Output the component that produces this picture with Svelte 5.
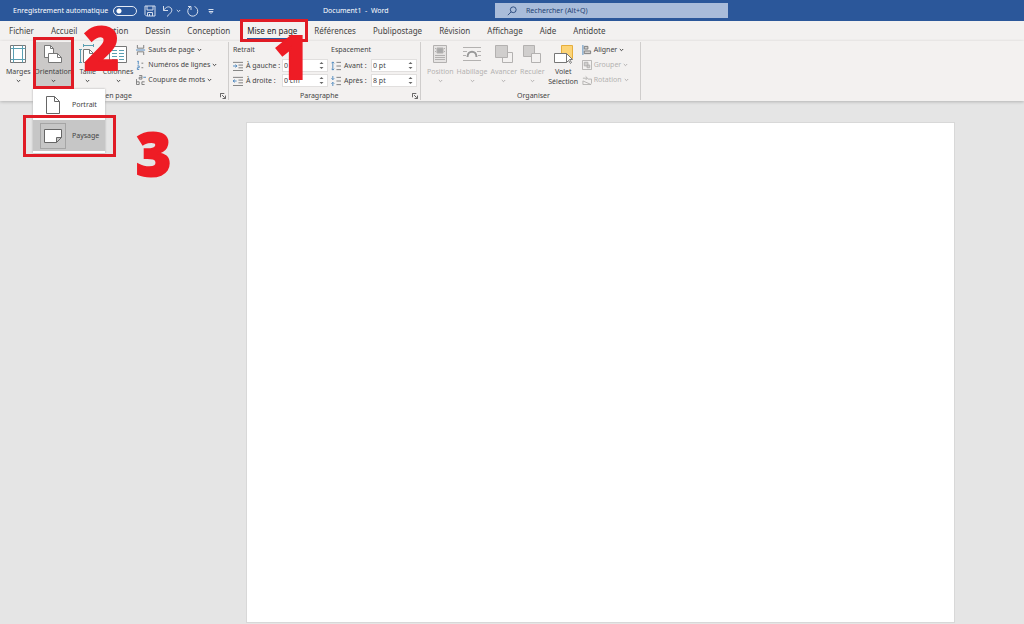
<script lang="ts">
  const tabs = ['Fichier', 'Accueil', 'Insertion', 'Dessin', 'Conception', 'Mise en page', 'Références', 'Publipostage', 'Révision', 'Affichage', 'Aide', 'Antidote'];

  const setupTools = ['Marges', 'Orientation', 'Taille', 'Colonnes'];
  const setupOptions = ['Sauts de page', 'Numéros de lignes', 'Coupure de mots'];
  const arrangeTools = ['Position', 'Habillage', 'Avancer', 'Reculer', 'Volet Sélection'];
  const arrangeOptions = ['Aligner', 'Grouper', 'Rotation'];

  let activeTab = $state('Mise en page');
  let orientation = $state('Paysage');
  let indentLeft = $state('0 cm');
  let indentRight = $state('0 cm');
  let before = $state('0 pt');
  let after = $state('8 pt');
</script>

{#snippet chevron()}
  <svg class="chevron" viewBox="0 0 5 4" aria-hidden="true"><path d="M.8 1l1.7 1.7L4.2 1" /></svg>
{/snippet}

{#snippet bigIcon(name: string)}
  <svg class="big-icon" viewBox="0 0 20 20" aria-hidden="true">
    {#if name === 'Marges'}
      <path class="paper" d="M2.500 1.500h15v17h-15z" />
      <path class="teal" d="M5.500 1.500v17M14.500 1.500v17M2.500 4.500h15M2.500 15.500h15" />
    {:else if name === 'Orientation'}
      <path class="paper" d="M1.500 1.500h6l3 3v9h-9z" />
      <path d="M7.500 1.500v3h3" />
      <path class="paper" d="M5.500 9.500h9l4 4v5h-13z" />
      <path d="M14.500 9.500v4h4" />
    {:else if name === 'Taille'}
      <path class="teal" d="M2.500 5v13M1 5.500h3M1 18.500h3M5 1.500h11M5.500 0v3M15.500 0v3" />
      <path class="paper" d="M5.500 5.500h6l4 4v9h-10z" />
      <path d="M11.500 5.500v4h4" />
    {:else if name === 'Colonnes'}
      <path class="paper" d="M1.500 2.500h17v16h-17z" />
      <path class="teal" d="M4 6.500h5M11 6.500h5M4 9.500h5M11 9.500h5M4 12.500h5M11 12.500h5M4 15.500h5M11 15.500h5" />
    {:else if name === 'Position'}
      <path class="light" d="M3.500 1.500h13v17h-13z" />
      <path class="solid" d="M7 4h6v5H7z" />
      <path d="M5 4.500h1M14 4.500h1M5 7.500h1M14 7.500h1M5 11.500h10M5 13.500h10M5 15.500h10" />
    {:else if name === 'Habillage'}
      <path d="M1 3.500h18M1 7.500h4M15 7.500h4M1 11.500h3M16 11.500h3M1 16.500h18" />
      <path class="arch" d="M5.500 13c0-7 9-7 9 0" />
    {:else if name === 'Avancer'}
      <path class="paper" d="M8.500 8.500h10v10h-10z" />
      <path class="shade" d="M1.500 1.500h12v12h-12z" />
    {:else if name === 'Reculer'}
      <path class="shade" d="M1.500 1.500h11v11h-11z" />
      <path class="paper" d="M9.500 9.500h9v9h-9z" />
    {:else}
      <path class="gold" d="M8.500 1.500h11v13h-11z" />
      <path class="paper" d="M1.500 9.500h12v9h-12z" />
      <path class="paper" d="M13.500 9.500v9l2-2 2 3 1-1-2-3h3z" />
    {/if}
  </svg>
{/snippet}

{#snippet smallIcon(name: string)}
  <svg class="small-icon" viewBox="0 0 11 11" aria-hidden="true">
    {#if name === 'Sauts de page'}
      <path d="M1.500 0v3.500h7V0M1.500 11V7.500h7V11" />
      <path class="blue" d="M0 5.500h10" />
    {:else if name === 'Numéros de lignes'}
      <path class="blue" d="M2.500 1v4M1.500 1.500h1M1.500 6.500h2v2h-2v2h2" />
      <path d="M6 3.500h2M6 8.500h2" />
    {:else if name === 'Coupure de mots'}
      <path d="M.5 4.500v6h3v-3h-3M9.500 7.500h-3v3h3M3.500 .5h3v4h-3v-2h3" />
      <path class="blue" d="M8 2.500h3" />
    {:else if name === 'Aligner'}
      <path class="blue" d="M1 0v11" />
      <path class="shade" d="M2.500 1.500h4v3h-4zM2.500 6.500h7v3h-7z" />
    {:else if name === 'Grouper'}
      <path d="M.5.500h10v10H.5z" />
      <path class="shade" d="M2.500 2.500h4v4h-4zM5.500 5.500h3v3h-3z" />
    {:else if name === 'Rotation'}
      <path d="M1 10.500h9l-9-4zM6.500 4.500h4v5M1 3.500h5M4 1.500l2 2-2 2" />
    {:else if name === 'left' || name === 'right'}
      <path d="M0 1.500h11M6 4.500h5M6 7.500h5M0 10.500h11" />
      <path class="blue" d={name === 'left' ? 'M0 5.500h4M2.500 4l2 1.500-2 1.500' : 'M0 5.500h4M2 4L0 5.500 2 7'} />
    {:else}
      <path d="M6 1.500h5M6 5.500h5M6 9.500h5" />
      <path class="blue" d={name === 'before' ? 'M2 1v9M.5 2.500L2 1l1.500 1.500M.5 8.500L2 10l1.500-1.500' : 'M2 0v4M.5 2.500L2 4l1.500-1.500M2 11V7M.5 8.500L2 7l1.500 1.500'} />
    {/if}
  </svg>
{/snippet}

{#snippet tool(name: string, disabled: boolean)}
  <button class="tool" class:tool--open={name === 'Orientation'} {disabled}>
    {@render bigIcon(name)}
    <span class="tool-label">{name}</span>
    {#if name !== 'Volet Sélection'}
      {@render chevron()}
    {/if}
  </button>
{/snippet}

{#snippet option(name: string, disabled: boolean)}
  <button class="option" {disabled}>
    {@render smallIcon(name)}
    <span>{name}</span>
    {@render chevron()}
  </button>
{/snippet}

{#snippet spinner()}
  <span class="arrows">
    <button aria-label="Augmenter"><svg viewBox="0 0 5 4"><path d="M.5 3h4l-2-2z" /></svg></button>
    <button aria-label="Diminuer"><svg viewBox="0 0 5 4"><path d="M.5 1h4l-2 2z" /></svg></button>
  </span>
{/snippet}

{#snippet launcher()}
  <button class="launcher" aria-label="Paramètres">
    <svg viewBox="0 0 7 7"><path d="M.5 5V.5H5M2.500 2.500l3 3M6.500 3v3.500H3" /></svg>
  </button>
{/snippet}

<div class="window">
  <header class="titlebar">
    <label class="autosave">
      Enregistrement automatique
      <input type="checkbox" class="switch" />
    </label>
    <div class="quick">
      <button aria-label="Enregistrer">
        <svg viewBox="0 0 12 12"><path d="M1 1h10v10H2.500L1 9.500zM3 1v4h6V1M3.500 11V7.500h5V11M5.500 9v2" /></svg>
      </button>
      <button aria-label="Annuler">
        <svg viewBox="0 0 12 12"><path d="M1.500 1v4.500H6M1.500 5.500C4 1.500 7 1 9 3c2.500 3-1 5.500-4 8.500" /></svg>
        {@render chevron()}
      </button>
      <button aria-label="Rétablir">
        <svg viewBox="0 0 12 12"><path d="M7.500 1.500a5 5 0 1 1-4.500.500M1 1.500h3v3.500" /></svg>
      </button>
      <button aria-label="Personnaliser">
        <svg viewBox="0 0 12 12"><path d="M3.500 4.500h5M4 6.500h4l-2 2z" /></svg>
      </button>
    </div>
    <div class="doc-name">Document1&nbsp; -&nbsp; Word</div>
    <label class="search">
      <svg viewBox="0 0 12 12" aria-hidden="true"><circle cx="7.500" cy="4.500" r="3.500" /><path d="M5 7l-4 4" /></svg>
      <input type="search" placeholder="Rechercher (Alt+Q)" aria-label="Rechercher" />
    </label>
  </header>

  <nav class="tabs">
    {#each tabs as tab}
      <button class="tab" class:tab--active={tab === activeTab} onclick={() => (activeTab = tab)}>{tab}</button>
    {/each}
  </nav>

  <div class="ribbon">
    <section class="group group--setup">
      <div class="group-body">
        {#each setupTools as name}
          {@render tool(name, false)}
        {/each}
        <div class="options">
          {#each setupOptions as name}
            {@render option(name, false)}
          {/each}
        </div>
      </div>
      <footer class="group-name">Mise en page {@render launcher()}</footer>
    </section>

    <section class="group group--paragraph">
      <div class="group-body">
        <div class="fields fields--indent">
          <span class="fields-title">Retrait</span>
          <label class="field">
            {@render smallIcon('left')}
            <span class="field-name">À gauche :</span>
            <span class="box"><input bind:value={indentLeft} />{@render spinner()}</span>
          </label>
          <label class="field">
            {@render smallIcon('right')}
            <span class="field-name">À droite :</span>
            <span class="box"><input bind:value={indentRight} />{@render spinner()}</span>
          </label>
        </div>
        <div class="fields">
          <span class="fields-title">Espacement</span>
          <label class="field">
            {@render smallIcon('before')}
            <span class="field-name">Avant :</span>
            <span class="box"><input bind:value={before} />{@render spinner()}</span>
          </label>
          <label class="field">
            {@render smallIcon('after')}
            <span class="field-name">Après :</span>
            <span class="box"><input bind:value={after} />{@render spinner()}</span>
          </label>
        </div>
      </div>
      <footer class="group-name">Paragraphe {@render launcher()}</footer>
    </section>

    <section class="group group--arrange">
      <div class="group-body">
        {#each arrangeTools as name}
          {@render tool(name, name !== 'Volet Sélection')}
        {/each}
        <div class="options">
          {#each arrangeOptions as name}
            {@render option(name, name !== 'Aligner')}
          {/each}
        </div>
      </div>
      <footer class="group-name">Organiser</footer>
    </section>
  </div>

  <main class="workspace">
    <div class="page"></div>
  </main>

  <div class="menu">
    <button class="menu-item" class:menu-item--active={orientation === 'Portrait'} onclick={() => (orientation = 'Portrait')}>
      <span class="menu-icon">
        <svg viewBox="0 0 20 20"><path d="M3.500 1.500h8l5 5v12h-13zM11.500 1.500v5h5" /></svg>
      </span>
      Portrait
    </button>
    <button class="menu-item" class:menu-item--active={orientation === 'Paysage'} onclick={() => (orientation = 'Paysage')}>
      <span class="menu-icon">
        <svg viewBox="0 0 20 20"><path d="M1.500 3.500h17v8l-5 5h-12zM18.500 11.500h-5v5" /></svg>
      </span>
      Paysage
    </button>
  </div>

  <!-- tutorial steps drawn over the window -->
  <div class="frame frame--tab"></div>
  <div class="frame frame--tool"></div>
  <div class="frame frame--menu"></div>
  <strong class="step step--one">1</strong>
  <strong class="step step--two">2</strong>
  <strong class="step step--three">3</strong>
</div>

<style>
  :global(body) {
    margin: 0;
    background: #e5e5e5;
  }

  .window {
    position: relative;
    display: flex;
    flex-direction: column;
    min-height: 100vh;
    overflow: hidden;
    font-family: 'Noto Sans', 'Open Sans', sans-serif;
    font-size: 7px;
    line-height: 10px;
    color: #444;
  }

  button,
  input {
    margin: 0;
    padding: 0;
    border: 0;
    background: none;
    font: inherit;
    color: inherit;
  }

  svg {
    display: block;
    flex: none;
    fill: none;
    stroke: currentColor;
  }

  .chevron {
    width: 5px;
    height: 4px;
  }

  /* title bar */
  .titlebar {
    display: flex;
    align-items: center;
    height: 21px;
    padding-left: 13px;
    background: #2b579a;
    color: #fff;
  }

  .autosave {
    display: flex;
    align-items: center;
    justify-content: space-between;
    width: 124px;
    white-space: nowrap;
  }

  .switch {
    appearance: none;
    box-sizing: border-box;
    width: 24px;
    height: 10px;
    border: 1px solid #e4eaf4;
    border-radius: 5px;
    background: radial-gradient(circle at 5px 4px, #fff 2px, transparent 3px);
  }

  .quick {
    display: flex;
    align-items: center;
    gap: 6px;
    box-sizing: border-box;
    width: 186px;
    padding-left: 7px;
  }

  .quick button {
    display: flex;
    align-items: center;
    gap: 2px;
    color: #d5deed;
  }

  .quick svg:first-child {
    width: 12px;
    height: 12px;
  }

  .doc-name {
    width: 172px;
  }

  .search {
    display: flex;
    align-items: center;
    gap: 9px;
    box-sizing: border-box;
    width: 233px;
    height: 15px;
    padding-left: 12px;
    background: #a9bcda;
    color: #1e3f73;
  }

  .search svg {
    width: 10px;
    height: 10px;
  }

  .search input {
    flex: 1;
    min-width: 0;
    outline: none;
  }

  .search input::placeholder {
    color: #1e3f73;
    opacity: 1;
  }

  /* tabs */
  .tabs {
    display: flex;
    gap: 17px;
    height: 20px;
    padding-left: 9px;
    background: #f3f1f0;
    font-size: 8px;
  }

  .tab {
    box-sizing: border-box;
    height: 19px;
    padding-top: 2px;
    border-bottom: 2px solid transparent;
    white-space: nowrap;
  }

  .tab--active {
    border-color: #2b579a;
    color: #222;
  }

  /* ribbon */
  .ribbon {
    position: relative;
    display: flex;
    height: 60px;
    background: #f3f1f0;
    box-shadow: 0 1px 3px #b4b4b4;
  }

  .group {
    display: flex;
    flex-direction: column;
    box-sizing: border-box;
    margin: 1px 0;
    border-right: 1px solid #cfcdcc;
  }

  .group--setup {
    width: 229px;
    padding-left: 6px;
  }

  .group--paragraph {
    width: 192px;
    padding-left: 4px;
  }

  .group--arrange {
    width: 220px;
    padding-left: 6px;
  }

  .group-body {
    display: flex;
    gap: 3px;
    height: 50px;
  }

  .group-name {
    display: flex;
    align-items: center;
    justify-content: center;
    height: 8px;
  }

  .group-name .launcher {
    margin-left: auto;
    margin-right: 2px;
  }

  .group--setup .group-name {
    padding-left: 82px;
  }

  .group--paragraph .group-name {
    padding-left: 67px;
  }

  .launcher svg {
    width: 6px;
    height: 6px;
  }

  .tool {
    display: flex;
    flex-direction: column;
    align-items: center;
    min-width: 24px;
    padding-top: 2px;
    white-space: nowrap;
  }

  .tool--open {
    box-sizing: border-box;
    width: 39px;
    background: #cbc9c8;
  }

  .tool-label {
    margin-top: 3px;
  }

  .group--arrange .tool:last-of-type .tool-label {
    width: 31px;
    white-space: normal;
  }

  .tool .chevron {
    margin-top: 2px;
  }

  .big-icon {
    width: 20px;
    height: 20px;
    color: #777;
  }

  .paper {
    fill: #fff;
  }

  .teal {
    stroke: #5a9fb2;
  }

  .blue {
    stroke: #4a86bd;
  }

  .shade {
    fill: #d0cecd;
  }

  .light {
    fill: #e6e4e3;
  }

  .solid {
    fill: #aaa;
  }

  .gold {
    fill: #fcd477;
    stroke: #e6ae3c;
  }

  .arch {
    stroke: #999;
    stroke-width: 2;
  }

  button:disabled,
  button:disabled .big-icon,
  button:disabled .small-icon {
    color: #b3b1b0;
  }

  button:disabled .paper {
    fill: #f3f1f0;
  }

  .options {
    display: flex;
    flex-direction: column;
    align-items: flex-start;
  }

  .option {
    display: flex;
    align-items: center;
    gap: 2px;
    height: 15px;
    white-space: nowrap;
  }

  .small-icon {
    width: 10px;
    height: 10px;
    color: #777;
  }

  /* paragraph fields */
  .fields {
    flex: 1;
  }

  .fields--indent {
    flex: none;
    width: 95px;
  }

  .fields-title {
    display: block;
    height: 13px;
    padding-top: 3px;
  }

  .field {
    display: flex;
    align-items: center;
    gap: 3px;
    height: 15px;
  }

  .field-name {
    width: 24px;
    white-space: nowrap;
  }

  .fields--indent .field-name {
    width: 33px;
  }

  .box {
    display: flex;
    box-sizing: border-box;
    width: 46px;
    height: 13px;
    padding-left: 1px;
    border: 1px solid #e1dfde;
    background: #fff;
  }

  .box input {
    flex: 1;
    min-width: 0;
    outline: none;
  }

  .arrows {
    display: flex;
    flex-direction: column;
    justify-content: space-around;
    width: 8px;
  }

  .arrows svg {
    width: 5px;
    height: 4px;
  }

  .arrows path {
    fill: #666;
    stroke: none;
  }

  /* document */
  .workspace {
    flex: 1;
    padding: 22px 70px 0 247px;
    background: #e5e5e5;
  }

  .page {
    aspect-ratio: 707 / 499;
    background: #fff;
    box-shadow: 0 0 0 1px #d8d8d8;
  }

  /* orientation menu */
  .menu {
    position: absolute;
    top: 89px;
    left: 33px;
    box-sizing: border-box;
    width: 72px;
    padding-bottom: 2px;
    background: #fff;
    box-shadow: 0 0 2px #aaa;
  }

  .menu-item {
    display: flex;
    align-items: center;
    gap: 6px;
    width: 100%;
    height: 31px;
    padding-left: 7px;
  }

  .menu-item--active {
    background: #c6c6c6;
  }

  .menu-icon {
    padding: 2px;
    border: 1px solid transparent;
    color: #666;
  }

  .menu-item--active .menu-icon {
    border-color: #a5a5a5;
  }

  .menu-icon svg {
    width: 20px;
    height: 20px;
  }

  .menu-item--active path {
    fill: #fff;
  }

  /* step markers */
  .frame {
    position: absolute;
    box-sizing: border-box;
    border: 3px solid #e01b25;
    pointer-events: none;
  }

  .frame--tab {
    top: 19px;
    left: 240px;
    width: 68px;
    height: 23px;
  }

  .frame--tool {
    top: 37px;
    left: 33px;
    width: 41px;
    height: 52px;
  }

  .frame--menu {
    top: 115px;
    left: 23px;
    width: 93px;
    height: 42px;
  }

  .step {
    position: absolute;
    font-family: 'Open Sans', 'Noto Sans', sans-serif;
    font-size: 60px;
    font-weight: 800;
    line-height: 60px;
    color: #ee1c25;
    -webkit-text-stroke: 2px #ee1c25;
    pointer-events: none;
  }

  .step--one {
    top: 26px;
    left: 274px;
  }

  .step--two {
    top: 17px;
    left: 84px;
  }

  .step--three {
    top: 123px;
    left: 136px;
  }
</style>
